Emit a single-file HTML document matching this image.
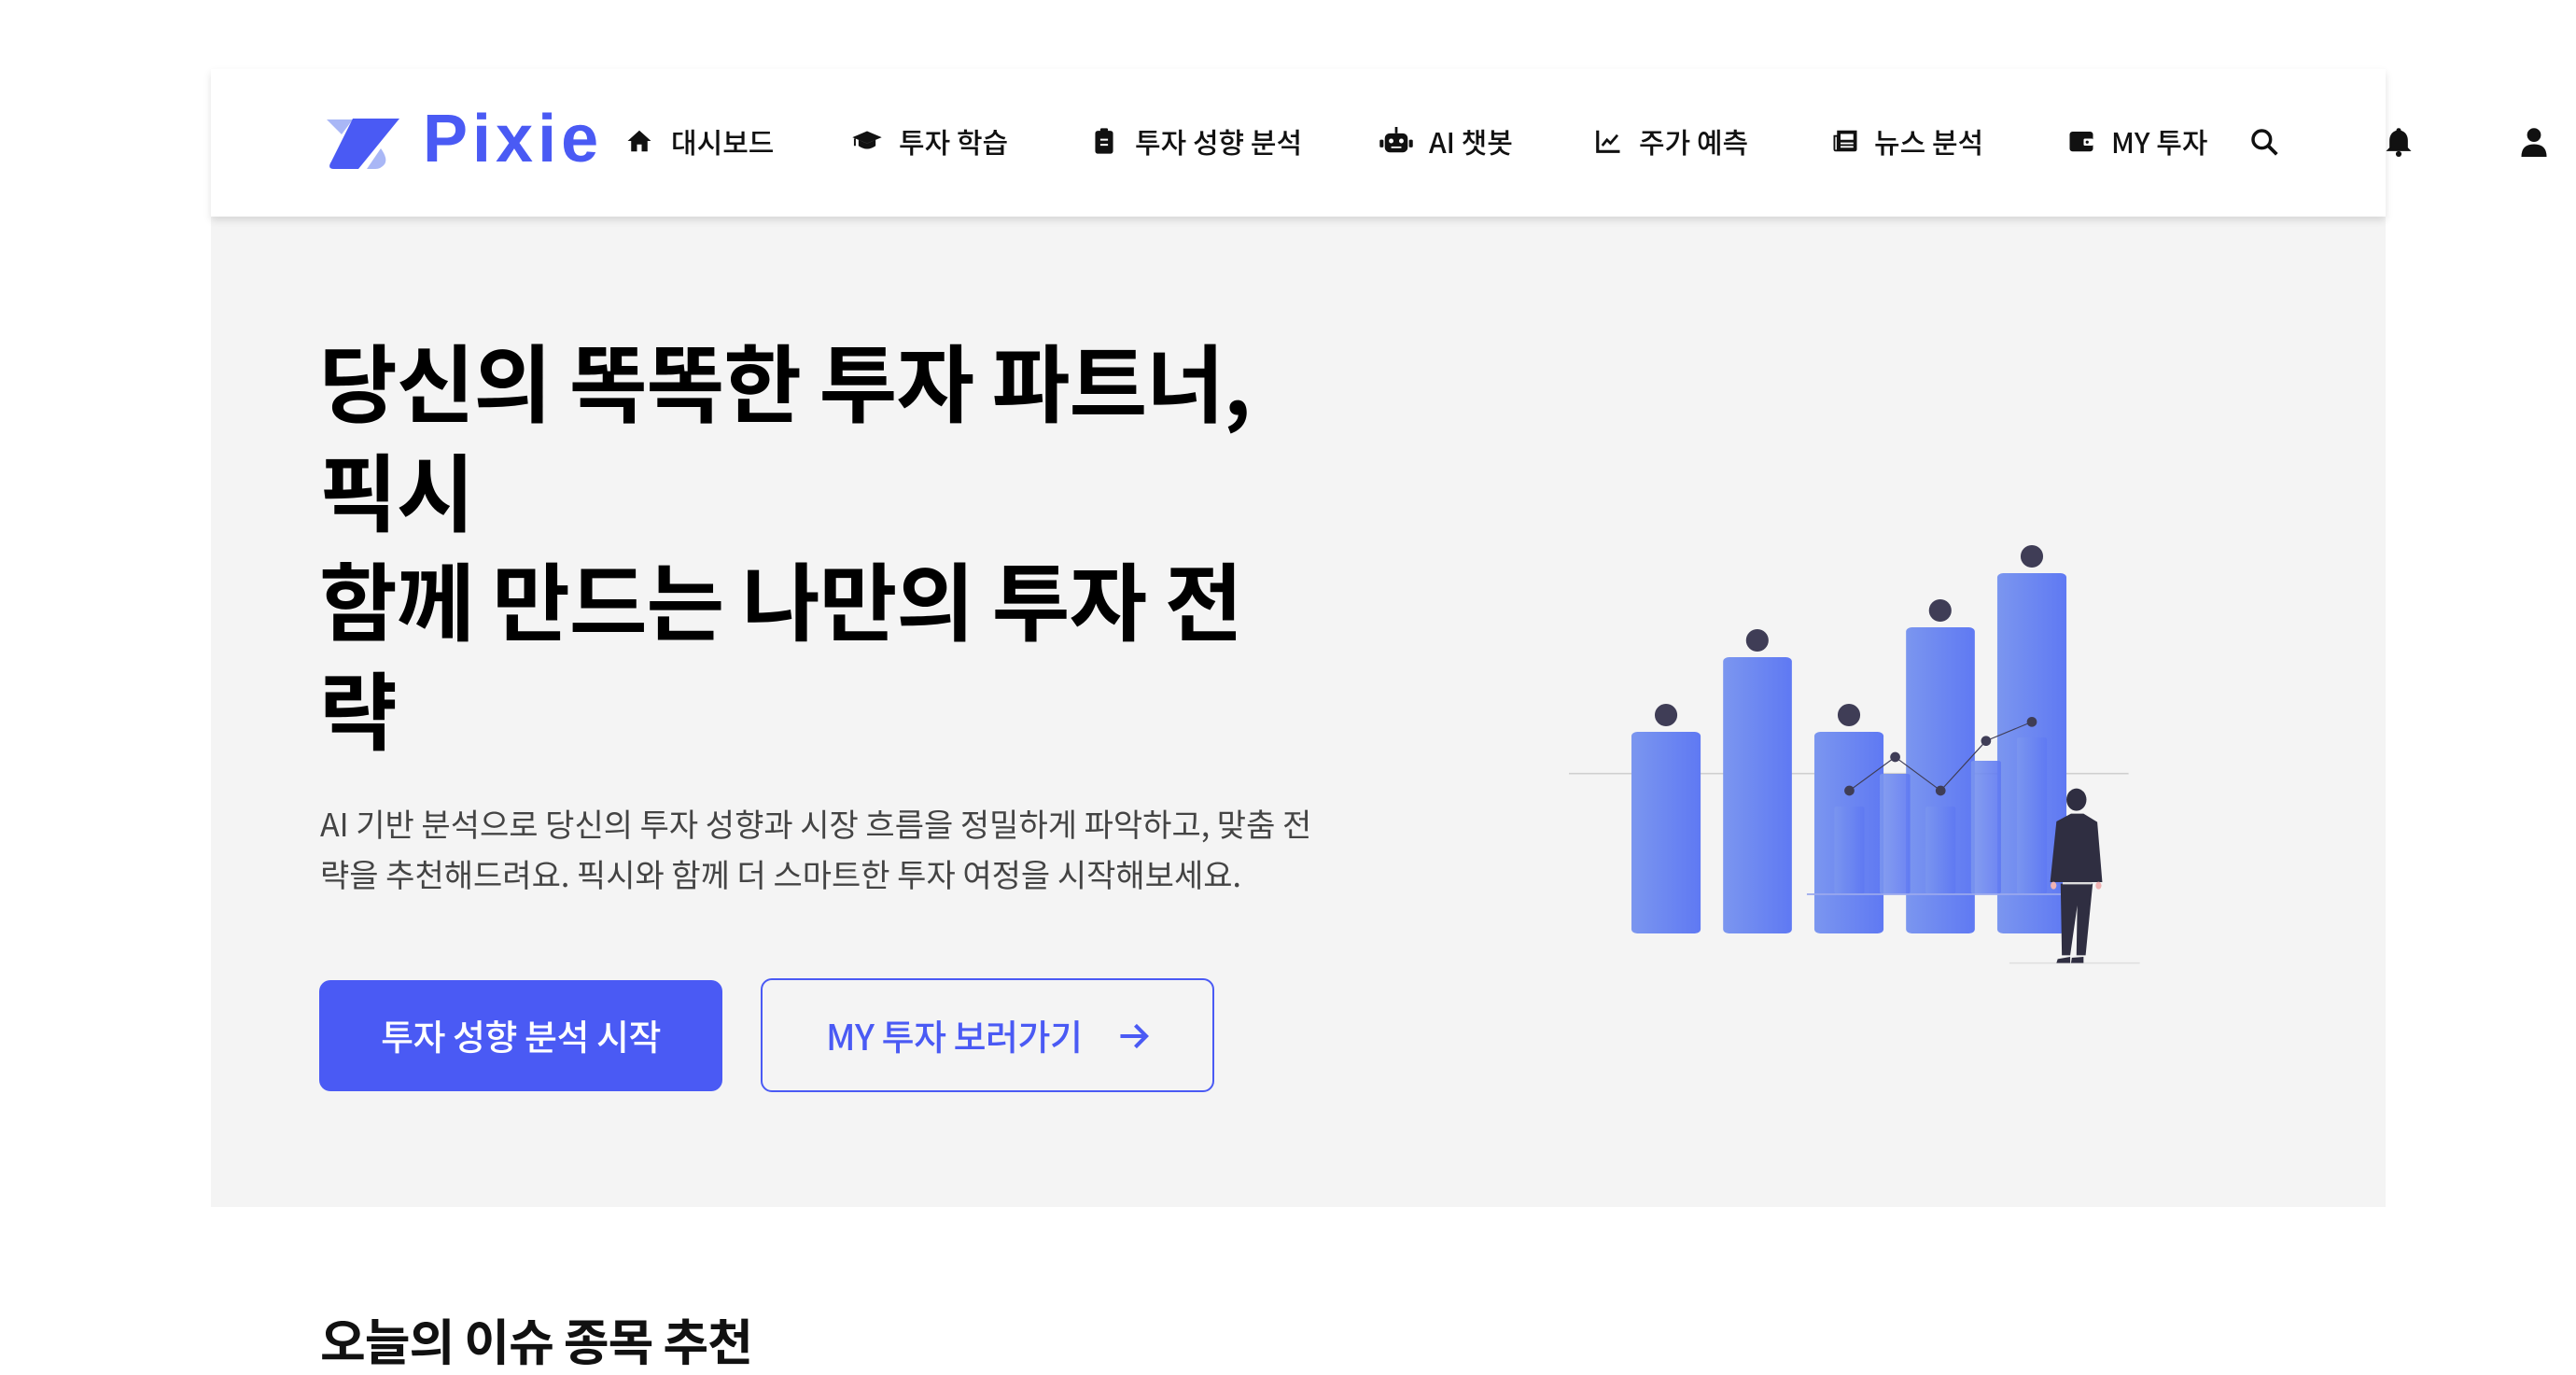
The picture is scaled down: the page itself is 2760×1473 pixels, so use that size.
<!DOCTYPE html>
<html><head><meta charset="utf-8">
<style>
*{margin:0;padding:0;box-sizing:border-box}
body{width:2760px;height:1459px;overflow:hidden;background:#fff;font-family:"Liberation Sans","Noto Sans CJK KR",sans-serif;position:relative;color:#111}
.nav{position:absolute;left:226px;top:74px;width:2330px;height:158px;background:#fff;box-shadow:0 4px 8px rgba(0,0,0,0.12)}
.hero{position:absolute;left:226px;top:232px;width:2330px;height:1061px;background:#f4f4f4}
.ni{position:absolute;top:131px;font-size:30px;font-weight:500;line-height:40px;white-space:nowrap;color:#111;font-family:"Noto Sans CJK KR",sans-serif}
.ic{position:absolute;top:136px}
h1{position:absolute;left:342px;top:348px;font-size:91px;line-height:117px;font-weight:700;letter-spacing:-1px;white-space:nowrap;font-family:"Noto Sans CJK KR",sans-serif;color:#000}
p.d{position:absolute;left:343px;top:855px;font-size:34px;line-height:54px;color:#444;white-space:nowrap;font-family:"Noto Sans CJK KR",sans-serif;letter-spacing:0}
.b1{position:absolute;left:342px;top:1050px;width:432px;height:119px;background:#4a5af4;border-radius:12px;color:#fff;font-size:38px;font-weight:500;text-align:center;line-height:117px;font-family:"Noto Sans CJK KR",sans-serif;letter-spacing:-0.5px}
.b2{position:absolute;left:815px;top:1048px;width:486px;height:122px;border:2px solid #4a5af4;border-radius:12px;color:#4a5af4;font-size:38px;font-weight:500;line-height:118px;font-family:"Noto Sans CJK KR",sans-serif;padding-left:68px;letter-spacing:-0.5px}
h2{position:absolute;left:343px;top:1397px;font-size:53px;font-weight:700;font-family:"Noto Sans CJK KR",sans-serif;color:#111;white-space:nowrap;letter-spacing:-1px}
</style></head><body>
<div class="hero"></div>
<div class="nav"></div>
<svg style="position:absolute;left:350px;top:126px" width="80" height="56" viewBox="0 0 80 56">
<polygon points="0,2 28,2 16,18" fill="#a9b7f6"/>
<path d="M28,1 L78,1 L34,55 L8,55 Q0,55 5,47 Z" fill="#4a5af4"/>
<path d="M43,55 L58,33 Q66,44 62,50 Q58,55 52,55 Z" fill="#a9b7f6"/>
</svg>
<div style="position:absolute;left:453px;top:104px;font-size:72px;font-weight:700;color:#4a5af4;letter-spacing:5px;line-height:90px">Pixie</div>

<svg class="ic" style="left:670px" width="30" height="30" viewBox="0 0 24 24"><path d="M12 3 L2 12 H5 V21 H10 V15 H14 V21 H19 V12 H22 Z" fill="#111"/></svg>
<div class="ni" style="left:719px">대시보드</div>
<svg class="ic" style="left:912px" width="34" height="30" viewBox="0 0 26 22"><path d="M13 3 L1 8 L13 13 L25 8 Z" fill="#111"/><path d="M6 10 V15 Q13 20 20 15 V10 L13 13 Z" fill="#111"/><path d="M3 9 V15" stroke="#111" stroke-width="1.5"/></svg>
<div class="ni" style="left:963px">투자 학습</div>
<svg class="ic" style="left:1172px" width="22" height="30" viewBox="0 0 16 22"><rect x="1" y="3" width="14" height="18" rx="2" fill="#111"/><rect x="5" y="1" width="6" height="4" rx="1" fill="#111"/><path d="M5 10H11M5 14H11" stroke="#fff" stroke-width="1.5"/></svg>
<div class="ni" style="left:1216px">투자 성향 분석</div>
<svg class="ic" style="left:1478px" width="36" height="30" viewBox="0 0 26 22"><rect x="4" y="5" width="18" height="15" rx="4" fill="#111"/><rect x="12" y="0" width="2" height="5" fill="#111"/><rect x="0" y="10" width="3" height="6" rx="1" fill="#111"/><rect x="23" y="10" width="3" height="6" rx="1" fill="#111"/><circle cx="9" cy="11" r="1.8" fill="#fff"/><circle cx="17" cy="11" r="1.8" fill="#fff"/><path d="M9 16H17" stroke="#fff" stroke-width="1.3"/></svg>
<div class="ni" style="left:1531px">AI 챗봇</div>
<svg class="ic" style="left:1708px" width="30" height="30" viewBox="0 0 24 24"><path d="M3 3V21H22" stroke="#111" stroke-width="2.5" fill="none"/><path d="M7 16L11 11L14 14L20 7" stroke="#111" stroke-width="2.2" fill="none"/></svg>
<div class="ni" style="left:1756px">주가 예측</div>
<svg class="ic" style="left:1962px" width="30" height="30" viewBox="0 0 24 24"><path d="M5 3H22V19Q22 21 20 21H4Q2 21 2 19V7H5Z" fill="#111"/><rect x="8" y="6" width="11" height="5" fill="#fff"/><path d="M8 14H19M8 17H19" stroke="#fff" stroke-width="1.5"/><rect x="3.5" y="8.5" width="1.2" height="11" fill="#fff"/></svg>
<div class="ni" style="left:2008px">뉴스 분석</div>
<svg class="ic" style="left:2215px" width="30" height="30" viewBox="0 0 24 24"><rect x="2" y="4" width="20" height="17" rx="2.5" fill="#111"/><rect x="14" y="10" width="8" height="6" rx="1" fill="#fff"/><circle cx="17" cy="13" r="1.3" fill="#111"/></svg>
<div class="ni" style="left:2262px">MY 투자</div>
<svg class="ic" style="left:2410px" width="32" height="32" viewBox="0 0 24 24"><circle cx="10" cy="10" r="7" stroke="#111" stroke-width="2.6" fill="none"/><path d="M15 15L22 22" stroke="#111" stroke-width="2.8"/></svg>
<svg class="ic" style="left:2555px" width="30" height="32" viewBox="0 0 24 26"><path d="M12 1Q14 1 14 3Q20 5 20 12V18L23 21H1L4 18V12Q4 5 10 3Q10 1 12 1Z" fill="#111"/><circle cx="12" cy="23.5" r="2.5" fill="#111"/></svg>
<svg class="ic" style="left:2700px" width="30" height="32" viewBox="0 0 24 26"><circle cx="12" cy="7" r="6" fill="#111"/><path d="M1 26Q1 15 12 15Q23 15 23 26Z" fill="#111"/></svg>

<h1>당신의 똑똑한 투자 파트너,<br>픽시<br>함께 만드는 나만의 투자 전<br>략</h1>
<p class="d">AI 기반 분석으로 당신의 투자 성향과 시장 흐름을 정밀하게 파악하고, 맞춤 전<br>략을 추천해드려요. 픽시와 함께 더 스마트한 투자 여정을 시작해보세요.</p>
<div class="b1">투자 성향 분석 시작</div>
<div class="b2">MY 투자 보러가기 <svg style="position:absolute;left:380px;top:44px" width="36" height="32" viewBox="0 0 24 22"><path d="M2 11H21M13 3L21 11L13 19" stroke="#4a5af4" stroke-width="2.8" fill="none"/></svg></div>

<svg style="position:absolute;left:1652px;top:550px" width="700" height="500" viewBox="0 0 1568 1500" preserveAspectRatio="none">
<defs><linearGradient id="g" x1="0" x2="1"><stop offset="0" stop-color="#7b96ef"/><stop offset="1" stop-color="#5f79f3"/></linearGradient></defs>
<line x1="65" y1="836" x2="1408" y2="836" stroke="#cfcfcf" stroke-width="5"/>
<rect x="215" y="702" width="166" height="648" rx="14" fill="url(#g)"/>
<rect x="435" y="462" width="165" height="888" rx="14" fill="url(#g)"/>
<rect x="654" y="702" width="166" height="648" rx="14" fill="url(#g)"/>
<rect x="874" y="366" width="165" height="984" rx="14" fill="url(#g)"/>
<rect x="1093" y="192" width="166" height="1158" rx="14" fill="url(#g)"/>
<g opacity="0.9">
<rect x="702" y="942" width="72" height="280" rx="6" fill="url(#g)"/>
<rect x="811" y="837" width="73" height="385" rx="6" fill="url(#g)"/>
<rect x="921" y="942" width="72" height="280" rx="6" fill="url(#g)"/>
<rect x="1030" y="795" width="72" height="427" rx="6" fill="url(#g)"/>
<rect x="1140" y="720" width="72" height="502" rx="6" fill="url(#g)"/>
</g>
<line x1="636" y1="1224" x2="1250" y2="1224" stroke="#9aa8ee" stroke-width="5"/>
<g fill="#3f3d56">
<ellipse cx="298" cy="648" rx="27" ry="36"/><ellipse cx="517" cy="408" rx="27" ry="36"/><ellipse cx="737" cy="648" rx="27" ry="36"/><ellipse cx="956" cy="312" rx="27" ry="36"/><ellipse cx="1176" cy="138" rx="27" ry="36"/>
<polyline points="738,891 848,783 957,891 1066,731 1176,670" fill="none" stroke="#3f3d56" stroke-width="3"/>
<ellipse cx="738" cy="891" rx="12" ry="16"/><ellipse cx="848" cy="783" rx="12" ry="16"/><ellipse cx="957" cy="891" rx="12" ry="16"/><ellipse cx="1066" cy="731" rx="12" ry="16"/><ellipse cx="1176" cy="670" rx="12" ry="16"/>
</g>
<line x1="1122" y1="1445" x2="1435" y2="1445" stroke="#e0e0e0" stroke-width="5"/>
<g fill="#2f2e41">
<ellipse cx="1283" cy="920" rx="24" ry="36"/>
<path d="M1235,990 L1270,965 L1300,965 L1333,992 L1345,1185 L1220,1185 Z"/>
<path d="M1245,1190 L1322,1190 L1305,1420 L1283,1420 L1285,1260 L1268,1420 L1248,1420 Z"/>
<path d="M1238,1432 L1268,1425 L1268,1445 L1235,1445 Z M1272,1428 L1300,1425 L1300,1445 L1270,1445Z"/>
</g>
<ellipse cx="1228" cy="1196" rx="7" ry="12" fill="#f0b3b3"/><ellipse cx="1336" cy="1196" rx="7" ry="12" fill="#f0b3b3"/>
<path d="M1250,1185 L1320,1185 L1320,1192 L1250,1192Z" fill="#ddd"/>
</svg>

<h2>오늘의 이슈 종목 추천</h2>
</body></html>
